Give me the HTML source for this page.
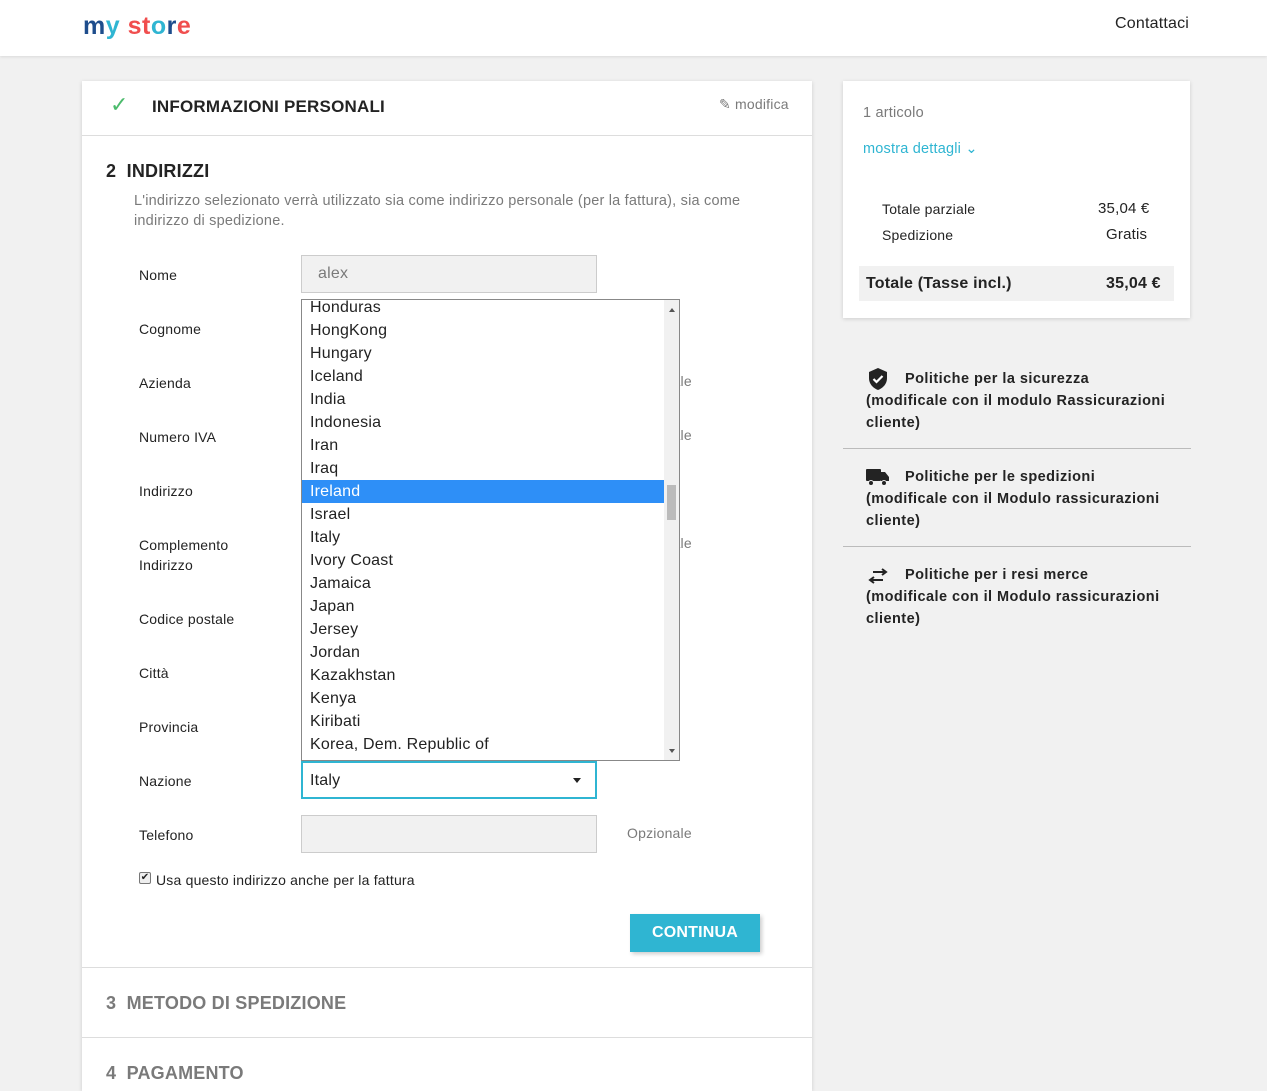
<!DOCTYPE html>
<html><head><meta charset="utf-8"><style>
*{box-sizing:border-box;margin:0;padding:0}
body{width:1267px;height:1082px;overflow:hidden;background:#f1f1f1;font-family:"Liberation Sans",sans-serif;color:#232323;position:relative;letter-spacing:0.2px}
.a{position:absolute}
.hdr{left:0;top:0;width:1267px;height:56px;background:#fff;box-shadow:0 1px 3px rgba(0,0,0,.1)}
.card{background:#fff;box-shadow:0 1px 4px rgba(0,0,0,.15)}
.lbl{font-size:14px;left:139px;color:#232323}
.inp{left:301px;width:296px;height:38px;background:#f1f1f1;border:1px solid #ccc}
.opt{left:627px;font-size:14px;color:#7a7a7a}
.list{left:301px;top:299px;width:379px;height:462px;background:#fff;border:1px solid #888;overflow:hidden}
.list div{height:23px;line-height:23px;padding-left:8px;font-size:16px;color:#222}
.sel{background:#2e8ff7;color:#fff!important}
.pol{left:866px;font-size:14.5px;font-weight:bold;line-height:22px;color:#232323;width:320px;letter-spacing:0.45px}
</style></head><body>
<div class="a hdr"></div>
<div class="a" style="left:83px;top:12px;font-size:25px;font-weight:bold;letter-spacing:0.5px"><span style="color:#1e4d8c">m</span><span style="color:#2fb5d2">y</span> <span style="color:#f04e4e">st</span><span style="color:#2fb5d2">o</span><span style="color:#1e4d8c">r</span><span style="color:#f04e4e">e</span></div>
<div class="a" style="left:1115px;top:15px;font-size:16px">Contattaci</div>

<div class="a card" style="left:82px;top:81px;width:730px;height:1010px"></div>
<div class="a" style="left:82px;top:135px;width:730px;height:1px;background:#ddd"></div>
<div class="a" style="left:110px;top:92px;font-size:22px;color:#4cbb6c">✓</div>
<div class="a" style="left:152px;top:97px;font-size:17px;font-weight:bold">INFORMAZIONI PERSONALI</div>
<div class="a" style="left:719px;top:96px;font-size:14px;color:#7a7a7a">✎ modifica</div>
<div class="a" style="left:106px;top:161px;font-size:18px;font-weight:bold">2&nbsp;&nbsp;INDIRIZZI</div>
<div class="a" style="left:134px;top:191px;font-size:14.5px;color:#7a7a7a;line-height:20px;width:620px">L'indirizzo selezionato verrà utilizzato sia come indirizzo personale (per la fattura), sia come indirizzo di spedizione.</div>

<div class="a lbl" style="top:267px">Nome</div>
<div class="a inp" style="top:255px;font-size:16px;color:#7a7a7a;padding:9px 16px">alex</div>
<div class="a lbl" style="top:321px">Cognome</div>
<div class="a lbl" style="top:375px">Azienda</div>
<div class="a opt" style="top:373px">Opzionale</div>
<div class="a lbl" style="top:429px">Numero IVA</div>
<div class="a opt" style="top:427px">Opzionale</div>
<div class="a lbl" style="top:483px">Indirizzo</div>
<div class="a lbl" style="line-height:20px;top:535px">Complemento<br>Indirizzo</div>
<div class="a opt" style="top:535px">Opzionale</div>
<div class="a lbl" style="top:611px">Codice postale</div>
<div class="a lbl" style="top:665px">Città</div>
<div class="a lbl" style="top:719px">Provincia</div>
<div class="a lbl" style="top:773px">Nazione</div>
<div class="a" style="left:301px;top:761px;width:296px;height:38px;border:2px solid #2fb5d2;background:#fff;font-size:16px;padding:9px 7px">Italy<span style="position:absolute;right:14px;top:15px;border:4px solid transparent;border-top:5px solid #222"></span></div>
<div class="a lbl" style="top:827px">Telefono</div>
<div class="a inp" style="top:815px"></div>
<div class="a opt" style="top:825px">Opzionale</div>
<div class="a" style="left:139px;top:872px;width:12px;height:12px;border:1px solid #777;border-radius:2px;font-size:10px;line-height:10px;text-align:center;background:#eee">✔</div>
<div class="a" style="left:156px;top:872px;font-size:14px">Usa questo indirizzo anche per la fattura</div>
<div class="a" style="left:630px;top:914px;width:130px;height:38px;background:#2fb5d2;color:#fff;font-weight:bold;font-size:16px;text-align:center;line-height:38px;box-shadow:2px 2px 4px rgba(0,0,0,.2)">CONTINUA</div>
<div class="a" style="left:82px;top:967px;width:730px;height:1px;background:#ddd"></div>
<div class="a" style="left:106px;top:993px;font-size:18px;font-weight:bold;color:#7a7a7a">3&nbsp;&nbsp;METODO DI SPEDIZIONE</div>
<div class="a" style="left:82px;top:1037px;width:730px;height:1px;background:#ddd"></div>
<div class="a" style="left:106px;top:1063px;font-size:18px;font-weight:bold;color:#7a7a7a">4&nbsp;&nbsp;PAGAMENTO</div>

<div class="a list">
<div style="margin-top:-4px">Honduras</div><div>HongKong</div><div>Hungary</div><div>Iceland</div><div>India</div><div>Indonesia</div><div>Iran</div><div>Iraq</div><div class="sel">Ireland</div><div>Israel</div><div>Italy</div><div>Ivory Coast</div><div>Jamaica</div><div>Japan</div><div>Jersey</div><div>Jordan</div><div>Kazakhstan</div><div>Kenya</div><div>Kiribati</div><div>Korea, Dem. Republic of</div>
<span style="position:absolute;right:0;top:0;width:15px;height:460px;background:#f1f1f1"></span>
<span style="position:absolute;right:3px;top:185px;width:9px;height:35px;background:#bbb"></span>
<span style="position:absolute;right:4px;top:5px;border:3px solid transparent;border-bottom:4px solid #555"></span>
<span style="position:absolute;right:4px;bottom:4px;border:3px solid transparent;border-top:4px solid #555"></span>
</div>

<div class="a card" style="left:843px;top:81px;width:347px;height:237px"></div>
<div class="a" style="left:863px;top:105px;font-size:14.5px;color:#7a7a7a">1 articolo</div>
<div class="a" style="left:863px;top:141px;font-size:14.5px;color:#2fb5d2">mostra dettagli ⌄</div>
<div class="a" style="left:882px;top:201px;font-size:14px">Totale parziale</div>
<div class="a" style="left:1098px;top:200px;font-size:15px">35,04 €</div>
<div class="a" style="left:882px;top:227px;font-size:14px">Spedizione</div>
<div class="a" style="left:1106px;top:226px;font-size:15px">Gratis</div>
<div class="a" style="left:859px;top:266px;width:315px;height:35px;background:#f1f1f1"></div>
<div class="a" style="left:866px;top:275px;font-size:16px;font-weight:bold">Totale (Tasse incl.)</div>
<div class="a" style="left:1106px;top:275px;font-size:16px;font-weight:bold">35,04 €</div>

<svg class="a" style="left:867px;top:367px" width="22" height="24" viewBox="0 0 22 24"><path d="M11 1L2 5v6c0 6 4 10 9 12 5-2 9-6 9-12V5z" fill="#232323"/><path d="M6.5 12l3 3 6-6" stroke="#fff" stroke-width="2.2" fill="none"/></svg>
<div class="a pol" style="top:368px"><span style="padding-left:39px">Politiche per la sicurezza</span><br>(modificale con il modulo Rassicurazioni cliente)</div>
<div class="a" style="left:843px;top:448px;width:348px;height:1px;background:#bbb"></div>
<svg class="a" style="left:866px;top:469px" width="24" height="18" viewBox="0 0 24 18"><rect x="0" y="0" width="15" height="12" rx="1" fill="#232323"/><path d="M15 3h4l4 5v4h-8z" fill="#232323"/><circle cx="5" cy="14" r="2.5" fill="#232323" stroke="#f1f1f1"/><circle cx="18" cy="14" r="2.5" fill="#232323" stroke="#f1f1f1"/></svg>
<div class="a pol" style="top:466px"><span style="padding-left:39px">Politiche per le spedizioni</span><br>(modificale con il Modulo rassicurazioni cliente)</div>
<div class="a" style="left:843px;top:546px;width:348px;height:1px;background:#bbb"></div>
<svg class="a" style="left:867px;top:568px" width="22" height="16" viewBox="0 0 22 16"><path d="M6 4h13M15 1l4 3-4 3M16 12H3M7 9l-4 3 4 3" stroke="#232323" stroke-width="2" fill="none"/></svg>
<div class="a pol" style="top:564px"><span style="padding-left:39px">Politiche per i resi merce</span><br>(modificale con il Modulo rassicurazioni cliente)</div>
</body></html>
